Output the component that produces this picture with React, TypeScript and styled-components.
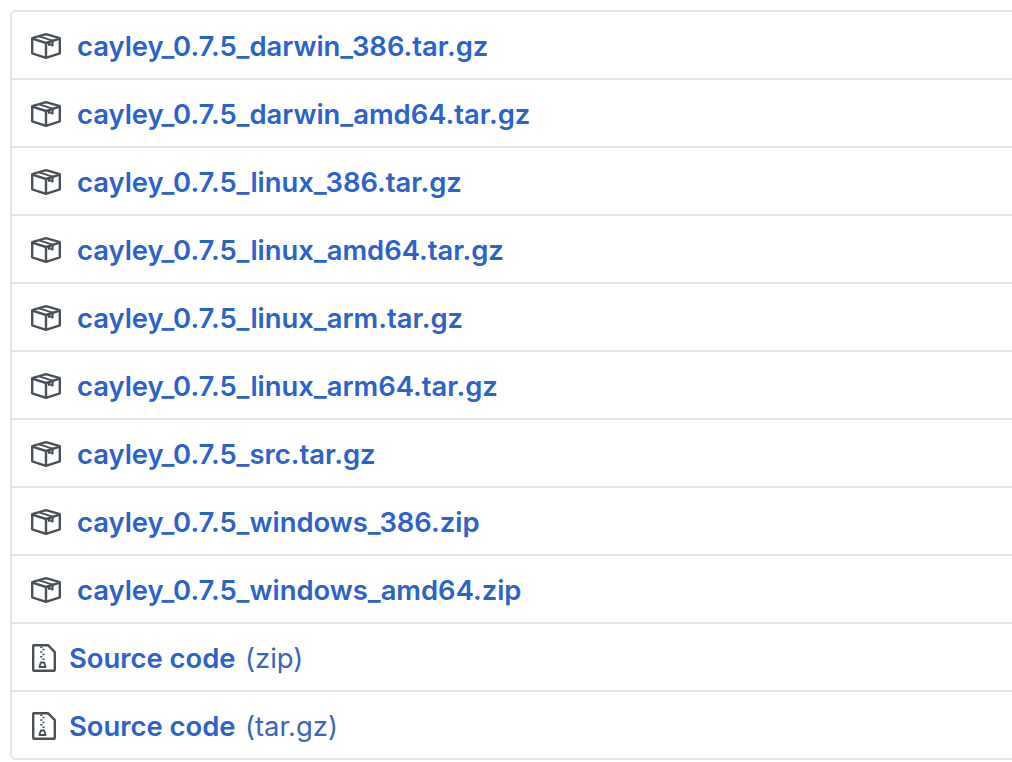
import React from "react";
import styled, { createGlobalStyle } from "styled-components";

const Global = createGlobalStyle`
  html, body { margin: 0; padding: 0; background: #fff; overflow: hidden; height: 762px; }
  body { font-family: Inter, "Liberation Sans", Arial, sans-serif; }
`;

const Page = styled.div`
  padding: 10px 0 0 10px;
  width: 1012px;
  box-sizing: border-box;
  overflow: hidden;
`;

const List = styled.ul`
  list-style: none;
  margin: 0 -20px 0 0;
  padding: 0;
  border: 2px solid #e1e4e8;
  border-radius: 6px;
`;

const Row = styled.li`
  display: flex;
  align-items: center;
  height: 64px;
  padding: 2px 0 0 18px;
  & + & { border-top: 2px solid #e1e4e8; }
`;

const IconSlot = styled.span<{ $w: number }>`
  display: inline-flex;
  justify-content: center;
  width: ${(p) => p.$w}px;
  margin-right: 15px;
  flex: none;
`;

const ZipSlot = styled(IconSlot)`
  margin-right: 13px;
  margin-left: 2px;
`;

const Name = styled.a`
  color: #2c62c9;
  font-size: 27.4px;
  font-weight: 600;
  text-decoration: none;
  white-space: nowrap;
`;

const Kind = styled.span`
  color: #3a66b8;
  font-size: 27.4px;
  margin-left: 9.5px;
  white-space: nowrap;
`;

const PackageIcon = () => (
  <svg width="30" height="26" viewBox="0 0 30 26" fill="none" stroke="#4a5058" strokeWidth="2.4" strokeLinejoin="round">
    <path d="M15 1.2 L1.2 5.2 V20.3 L15 24.8 L28.8 20.3 V5.2 Z" />
    <path d="M1.2 5.6 L15 10 L28.8 5.6 M15 10 V24.8" />
    <path d="M8 3.4 L21.6 7.6 V12.6 L19 11.2 L17.8 12 V9" strokeWidth="2" />
  </svg>
);

const ZipIcon = () => (
  <svg width="24" height="28" viewBox="0 0 24 28" fill="none" stroke="#4a5058" strokeWidth="2.4" strokeLinejoin="round">
    <path d="M2.5 1.2 H16 L22.8 8.2 V25.8 A1 1 0 0 1 21.8 26.8 H2.2 A1 1 0 0 1 1.2 25.8 V2.5 A1 1 0 0 1 2.5 1.2 Z" />
    <path d="M8.2 3.2H10.4M10.4 5.6H12.6M8.2 8H10.4M10.4 10.4H12.6M8.2 12.8H10.4M10.4 15.2H12.6" strokeWidth="1.5" />
    <path d="M8.8 18.5H12.2L13.6 23H7.4Z" strokeWidth="1.8" />
  </svg>
);

const packages = [
  "cayley_0.7.5_darwin_386.tar.gz",
  "cayley_0.7.5_darwin_amd64.tar.gz",
  "cayley_0.7.5_linux_386.tar.gz",
  "cayley_0.7.5_linux_amd64.tar.gz",
  "cayley_0.7.5_linux_arm.tar.gz",
  "cayley_0.7.5_linux_arm64.tar.gz",
  "cayley_0.7.5_src.tar.gz",
  "cayley_0.7.5_windows_386.zip",
  "cayley_0.7.5_windows_amd64.zip",
];

export default function App() {
  return (
    <Page>
      <Global />
      <List>
        {packages.map((name) => (
          <Row key={name}>
            <IconSlot $w={32}><PackageIcon /></IconSlot>
            <Name href="#">{name}</Name>
          </Row>
        ))}
        {["(zip)", "(tar.gz)"].map((kind) => (
          <Row key={kind}>
            <ZipSlot $w={24}><ZipIcon /></ZipSlot>
            <Name href="#">Source code</Name>
            <Kind>{kind}</Kind>
          </Row>
        ))}
      </List>
    </Page>
  );
}
